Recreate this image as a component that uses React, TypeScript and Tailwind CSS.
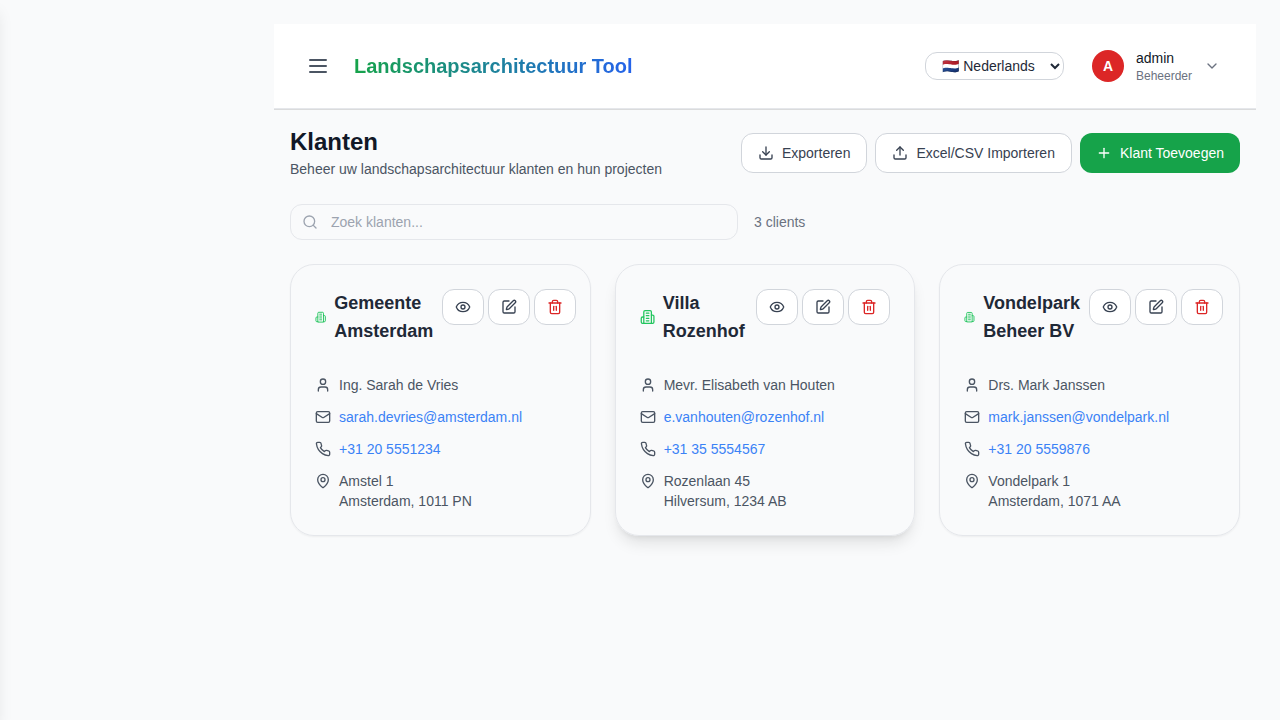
import type { ReactNode } from 'react';
import { ChevronDown, Download, Eye, MapPin, Plus, Search, SquarePen, Trash2, Upload, User } from 'lucide-react';

type Client = {
  name: [string, string];
  contact: string;
  email: string;
  phone: string;
  street: string;
  city: string;
  iconClass: string;
  titleClass: string;
  cardClass: string;
};

const idle = 'shadow-[0_1px_2px_0_rgba(0,0,0,0.05)]';
const raised = 'shadow-[0_10px_15px_-3px_rgba(0,0,0,0.1),0_4px_6px_-4px_rgba(0,0,0,0.1)]';

const clients: Client[] = [
  {
    name: ['Gemeente', 'Amsterdam'],
    contact: 'Ing. Sarah de Vries',
    email: 'sarah.devries@amsterdam.nl',
    phone: '+31 20 5551234',
    street: 'Amstel 1',
    city: 'Amsterdam, 1011 PN',
    iconClass: 'h-4 w-[11.3px]',
    titleClass: 'w-[127px]',
    cardClass: idle,
  },
  {
    name: ['Villa', 'Rozenhof'],
    contact: 'Mevr. Elisabeth van Houten',
    email: 'e.vanhouten@rozenhof.nl',
    phone: '+31 35 5554567',
    street: 'Rozenlaan 45',
    city: 'Hilversum, 1234 AB',
    iconClass: 'h-4 w-[15.2px]',
    titleClass: 'w-[116.3px]',
    cardClass: raised,
  },
  {
    name: ['Vondelpark', 'Beheer BV'],
    contact: 'Drs. Mark Janssen',
    email: 'mark.janssen@vondelpark.nl',
    phone: '+31 20 5559876',
    street: 'Vondelpark 1',
    city: 'Amsterdam, 1071 AA',
    iconClass: 'h-4 w-[10.9px]',
    titleClass: 'w-[125px]',
    cardClass: idle,
  },
];

const outline = 'flex items-center justify-center rounded-xl border border-[#d1d5db] bg-white text-[#374151]';

function Glyph({ className, children }: { className: string; children: ReactNode }) {
  return (
    <svg className={`shrink-0 ${className}`} viewBox="0 0 24 24" fill="none" stroke="currentColor" strokeWidth="2" strokeLinecap="round" strokeLinejoin="round">
      {children}
    </svg>
  );
}

function BuildingIcon({ className }: { className: string }) {
  return (
    <Glyph className={className}>
      <path d="M6 22V4a2 2 0 0 1 2-2h8a2 2 0 0 1 2 2v18Z" />
      <path d="M6 12H4a2 2 0 0 0-2 2v6a2 2 0 0 0 2 2h2" />
      <path d="M18 9h2a2 2 0 0 1 2 2v9a2 2 0 0 1-2 2h-2" />
      <path d="M10 6h4" />
      <path d="M10 10h4" />
      <path d="M10 14h4" />
      <path d="M10 18h4" />
    </Glyph>
  );
}

function MailIcon() {
  return (
    <Glyph className="h-4 w-4">
      <rect width="20" height="16" x="2" y="4" rx="2" />
      <path d="m22 7-8.97 5.7a1.94 1.94 0 0 1-2.06 0L2 7" />
    </Glyph>
  );
}

function PhoneIcon() {
  return (
    <Glyph className="h-4 w-4">
      <path d="M22 16.92v3a2 2 0 0 1-2.18 2 19.79 19.79 0 0 1-8.63-3.07 19.5 19.5 0 0 1-6-6 19.79 19.79 0 0 1-3.07-8.67A2 2 0 0 1 4.11 2h3a2 2 0 0 1 2 1.72 12.84 12.84 0 0 0 .7 2.81 2 2 0 0 1-.45 2.11L8.09 9.91a16 16 0 0 0 6 6l1.27-1.27a2 2 0 0 1 2.11-.45 12.84 12.84 0 0 0 2.81.7A2 2 0 0 1 22 16.92z" />
    </Glyph>
  );
}

function ClientCard({ client }: { client: Client }) {
  return (
    <article className={`h-[272px] min-w-0 rounded-3xl border border-[#e5e7eb] p-6 ${client.cardClass}`}>
      <div className="flex">
        <h3 className={`flex shrink-0 items-center gap-2 text-lg leading-7 font-semibold text-[#1f2937] ${client.titleClass}`}>
          <BuildingIcon className={`text-[#22c55e] ${client.iconClass}`} />
          <span className="whitespace-nowrap">
            {client.name[0]}
            <br />
            {client.name[1]}
          </span>
        </h3>
        <div className="flex shrink-0 gap-1">
          <button className={`h-9 w-[42px] ${outline}`}><Eye size={16} /></button>
          <button className={`h-9 w-[42px] ${outline}`}><SquarePen size={16} /></button>
          <button className="flex h-9 w-[42px] items-center justify-center rounded-xl border border-[#d1d5db] bg-white text-[#dc2626]"><Trash2 size={16} /></button>
        </div>
      </div>
      <div className="mt-[30px] flex flex-col gap-3 text-sm text-[#4b5563]">
        <div className="flex items-center gap-2"><User size={16} />{client.contact}</div>
        <div className="flex items-center gap-2"><MailIcon /><a className="text-[#3b82f6]">{client.email}</a></div>
        <div className="flex items-center gap-2"><PhoneIcon /><a className="text-[#3b82f6]">{client.phone}</a></div>
        <div className="flex items-start gap-2">
          <MapPin size={16} className="mt-0.5" />
          <div>
            <div>{client.street}</div>
            <div>{client.city}</div>
          </div>
        </div>
      </div>
    </article>
  );
}

export default function App() {
  return (
    <div className="flex h-screen overflow-hidden bg-[#f9fafb] font-['Liberation_Sans',Arial,sans-serif] text-[#111827]">
      <aside className="fixed inset-y-0 left-0 w-64 -translate-x-full bg-white shadow-[0_10px_15px_-3px_rgba(0,0,0,0.1),0_4px_6px_-4px_rgba(0,0,0,0.1)]" />
      <div className="ml-[274px] w-[982px] pt-6">
        <header className="flex h-[85px] items-center justify-between border-b border-[#e5e7eb] bg-white px-8 shadow-[0_1px_0_0_rgba(0,0,0,0.12)]">
          <div className="flex items-center gap-6">
            <button className="text-[#4b5563]">
              <Glyph className="h-6 w-6">
                <path d="M4 6h16M4 12h16M4 18h16" />
              </Glyph>
            </button>
            <h1 className="bg-linear-to-r/srgb from-[#16a34a] to-[#2563eb] bg-clip-text text-xl font-bold text-transparent">Landschapsarchitectuur Tool</h1>
          </div>
          <div className="flex items-center gap-7 pr-1">
            <select className="h-7 w-[139px] rounded-xl border border-[#d1d5db] bg-white pl-[12.4px] text-sm text-[#1f2937]">
              <option>🇳🇱 Nederlands</option>
            </select>
            <div className="flex items-center gap-3">
              <div className="flex h-8 w-8 items-center justify-center rounded-full bg-[#dc2626] text-sm font-bold text-white">A</div>
              <div>
                <div className="text-sm">admin</div>
                <div className="text-xs text-[#6b7280]">Beheerder</div>
              </div>
              <ChevronDown size={16} className="text-[#6b7280]" />
            </div>
          </div>
        </header>
        <main className="px-4 pt-[17px]">
          <div className="flex items-center justify-between">
            <div>
              <h2 className="text-2xl font-bold">Klanten</h2>
              <p className="mt-px pb-px text-sm text-[#4b5563]">Beheer uw landschapsarchitectuur klanten en hun projecten</p>
            </div>
            <div className="flex gap-2 text-sm">
              <button className={`h-10 gap-2 px-4 ${outline}`}><Download size={16} />Exporteren</button>
              <button className={`h-10 gap-2 px-4 ${outline}`}><Upload size={16} />Excel/CSV Importeren</button>
              <button className="flex h-10 items-center gap-2 rounded-xl bg-[#16a34a] px-4 text-white"><Plus size={16} />Klant Toevoegen</button>
            </div>
          </div>
          <div className="mt-6 flex items-center gap-4">
            <div className="flex h-9 w-[448px] items-center gap-[13px] rounded-xl border border-[#e5e7eb] pl-[11px]">
              <Search size={16} className="text-[#9ca3af]" />
              <input className="flex-1 bg-transparent text-sm outline-none placeholder:text-[#9ca3af]" placeholder="Zoek klanten..." />
            </div>
            <span className="text-sm text-[#6b7280]">3 clients</span>
          </div>
          <section className="mt-6 grid grid-cols-3 gap-6">
            {clients.map((client) => <ClientCard key={client.email} client={client} />)}
          </section>
        </main>
      </div>
    </div>
  );
}
